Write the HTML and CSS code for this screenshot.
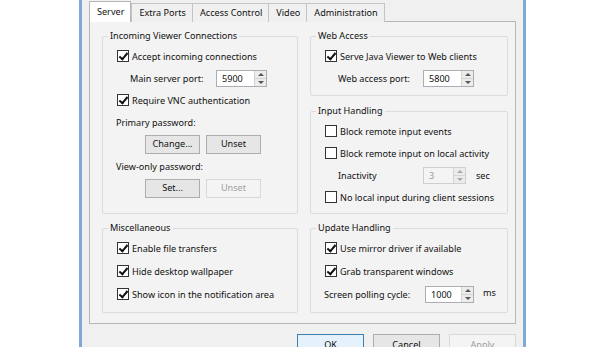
FILE: index.html
```html
<!DOCTYPE html>
<html lang="en">
<head>
  <meta charset="UTF-8" />
  <title>TightVNC Server Configuration</title>
  <link rel="stylesheet" href="styles.css">
</head>
<body>
  <div class="window">

    <!-- tab strip -->
    <div class="tabs">
      <div class="tab active">Server</div>
      <div class="tab">Extra Ports</div>
      <div class="tab">Access Control</div>
      <div class="tab">Video</div>
      <div class="tab">Administration</div>
    </div>

    <!-- Server page -->
    <div class="panel">

      <fieldset class="group incoming">
        <legend>Incoming Viewer Connections</legend>
        <label class="check"><span class="box on"></span>Accept incoming connections</label>
        <div class="field sub">
          <span class="field-label w-main">Main server port:</span>
          <span class="spin w-port"><span class="spin-value">5900</span><span class="spin-btns"><i class="up"></i><i class="down"></i></span></span>
        </div>
        <label class="check"><span class="box on"></span>Require VNC authentication</label>
        <div class="field">Primary password:</div>
        <div class="btn-row">
          <button class="btn small">Change...</button>
          <button class="btn small">Unset</button>
        </div>
        <div class="field">View-only password:</div>
        <div class="btn-row">
          <button class="btn small">Set...</button>
          <button class="btn small" disabled>Unset</button>
        </div>
      </fieldset>

      <div class="stack">
        <fieldset class="group web">
          <legend>Web Access</legend>
          <label class="check"><span class="box on"></span>Serve Java Viewer to Web clients</label>
          <div class="field sub">
            <span class="field-label w-web">Web access port:</span>
            <span class="spin w-port"><span class="spin-value">5800</span><span class="spin-btns"><i class="up"></i><i class="down"></i></span></span>
          </div>
        </fieldset>

        <fieldset class="group grow">
          <legend>Input Handling</legend>
          <label class="check"><span class="box"></span>Block remote input events</label>
          <label class="check"><span class="box"></span>Block remote input on local activity</label>
          <div class="field sub">
            <span class="field-label w-web">Inactivity</span>
            <span class="spin w-sec disabled"><span class="spin-value">3</span><span class="spin-btns"><i class="up"></i><i class="down"></i></span></span>
            <span class="unit">sec</span>
          </div>
          <label class="check"><span class="box"></span>No local input during client sessions</label>
        </fieldset>
      </div>

      <fieldset class="group">
        <legend>Miscellaneous</legend>
        <label class="check roomy"><span class="box on"></span>Enable file transfers</label>
        <label class="check roomy"><span class="box on"></span>Hide desktop wallpaper</label>
        <label class="check roomy"><span class="box on"></span>Show icon in the notification area</label>
      </fieldset>

      <fieldset class="group">
        <legend>Update Handling</legend>
        <label class="check roomy"><span class="box on"></span>Use mirror driver if available</label>
        <label class="check roomy"><span class="box on"></span>Grab transparent windows</label>
        <div class="field roomy">
          <span class="field-label w-poll">Screen polling cycle:</span>
          <span class="spin w-ms"><span class="spin-value">1000</span><span class="spin-btns"><i class="up"></i><i class="down"></i></span></span>
          <span class="unit ms">ms</span>
        </div>
      </fieldset>

    </div>

    <!-- dialog buttons -->
    <div class="actions">
      <button class="btn default">OK</button>
      <button class="btn">Cancel</button>
      <button class="btn" disabled>Apply</button>
    </div>
  </div>
</body>
</html>
```

FILE: styles.css
```css
* {
  box-sizing: border-box;
}

html, body {
  margin: 0;
  padding: 0;
  background: #ffffff;
  font-family: 'Noto Sans', 'Open Sans', sans-serif;
  font-size: 9.1px;
  color: #111111;
}

body {
  width: 608px;
  height: 347px;
  overflow: hidden;
}

/* dialog window (the frame continues past the photo) */
.window {
  margin-left: 79px;
  width: 447px;
  height: 347px;
  border-left: 3px solid #80a9d6;
  border-right: 3px solid #80a9d6;
  background: #f0f0f0;
  padding: 1px 7px 0 7px;
}

/* =================
   TABS
   ================= */
.tabs {
  display: flex;
  align-items: flex-end;
  height: 21px;
  margin-bottom: -1px;
  position: relative;
  z-index: 2;
}

.tab {
  height: 19px;
  line-height: 17px;
  padding: 0 6px 0 7px;
  border: 1px solid #c4c4c4;
  border-bottom: none;
  margin-left: -1px;
  background: #f0f0f0;
  white-space: nowrap;
}

.tab.active {
  height: 21px;
  line-height: 19px;
  margin-left: 0;
  padding: 0 6px 0 7px;
  background: #ffffff;
  border-color: #b6b6b6;
}

.tab.active + .tab {
  margin-left: 0;
}

/* =================
   TAB PAGE
   ================= */
.panel {
  border: 1px solid #b6b6b6;
  background: #f3f3f3;
  height: 303px;
  padding: 7px 8px 0 12px;
  display: grid;
  grid-template-columns: 196px 198px;
  grid-template-rows: 185px 92px;
  column-gap: 12px;
  row-gap: 7px;
}

.stack {
  display: flex;
  flex-direction: column;
  gap: 8px;
}

.group {
  margin: 0;
  border: 1px solid #dcdcdc;
  border-radius: 2px;
  padding: 3px 6px 0 13px;
  display: flex;
  flex-direction: column;
  gap: 2px;
  min-width: 0;
}

.group.web {
  padding-bottom: 7px;
}

.group.grow {
  flex: 1;
}

.group legend {
  padding: 0 2px;
  margin-left: -8px;
  line-height: 14px;
}

/* checkbox rows */
.check {
  display: flex;
  align-items: center;
  height: 20px;
  white-space: nowrap;
}

.roomy {
  margin-bottom: 1px;
}

.box {
  width: 12px;
  height: 12px;
  border: 1px solid #333333;
  background: #ffffff;
  margin: 0 3px 0 1px;
  flex: none;
  position: relative;
}

.box.on::after {
  content: '';
  position: absolute;
  left: 3px;
  top: 0px;
  width: 3px;
  height: 7px;
  border: solid #111111;
  border-width: 0 2px 2px 0;
  transform: rotate(40deg);
}

/* label + spin rows */
.field {
  display: flex;
  align-items: center;
  height: 20px;
  white-space: nowrap;
}

.field.sub {
  padding-left: 14px;
}

.field-label.w-main { width: 86px; }
.field-label.w-web { width: 85px; }
.field-label.w-poll { width: 101px; }

.spin {
  display: flex;
  height: 17px;
  border: 1px solid #abadb3;
  background: #ffffff;
}

.w-port { width: 51px; }
.w-sec { width: 43px; }
.w-ms { width: 49px; }

.spin-value {
  flex: 1;
  padding-left: 5px;
  line-height: 15px;
}

.spin.disabled {
  background: #f4f4f4;
  border-color: #cfcfcf;
  color: #9a9a9a;
}

.spin-btns {
  width: 12px;
  display: flex;
  flex-direction: column;
  border-left: 1px solid #d4d4d4;
  background: #ececec;
}

.spin-btns i {
  flex: 1;
  display: flex;
  align-items: center;
  justify-content: center;
}

.spin-btns i + i {
  border-top: 1px solid #d4d4d4;
}

.spin-btns .up::before {
  content: '';
  border-left: 3px solid transparent;
  border-right: 3px solid transparent;
  border-bottom: 3px solid #555555;
}

.spin-btns .down::before {
  content: '';
  border-left: 3px solid transparent;
  border-right: 3px solid transparent;
  border-top: 3px solid #555555;
}

.spin.disabled .spin-btns .up::before { border-bottom-color: #a8a8a8; }
.spin.disabled .spin-btns .down::before { border-top-color: #a8a8a8; }

.unit {
  margin-left: 10px;
}

.unit.ms {
  margin-left: 9px;
  margin-top: -4px;
}

/* =================
   BUTTONS
   ================= */
.btn {
  font: inherit;
  color: #111111;
  height: 22px;
  width: 67px;
  border: 1px solid #adadad;
  background: #e6e6e6;
  padding: 0;
  line-height: 18px;
}

.btn.small {
  width: 55px;
  height: 19px;
  line-height: 16px;
}

.btn.default {
  border-color: #3c7fb1;
  background: #e5f1fb;
}

.btn:disabled {
  color: #a0a0a0;
  border-color: #d9d9d9;
  background: #f4f4f4;
}

.btn-row {
  display: flex;
  gap: 6px;
  padding-left: 29px;
  height: 20px;
  align-items: center;
}

.actions {
  display: flex;
  justify-content: flex-end;
  gap: 9px;
  margin-top: 10px;
}
```
